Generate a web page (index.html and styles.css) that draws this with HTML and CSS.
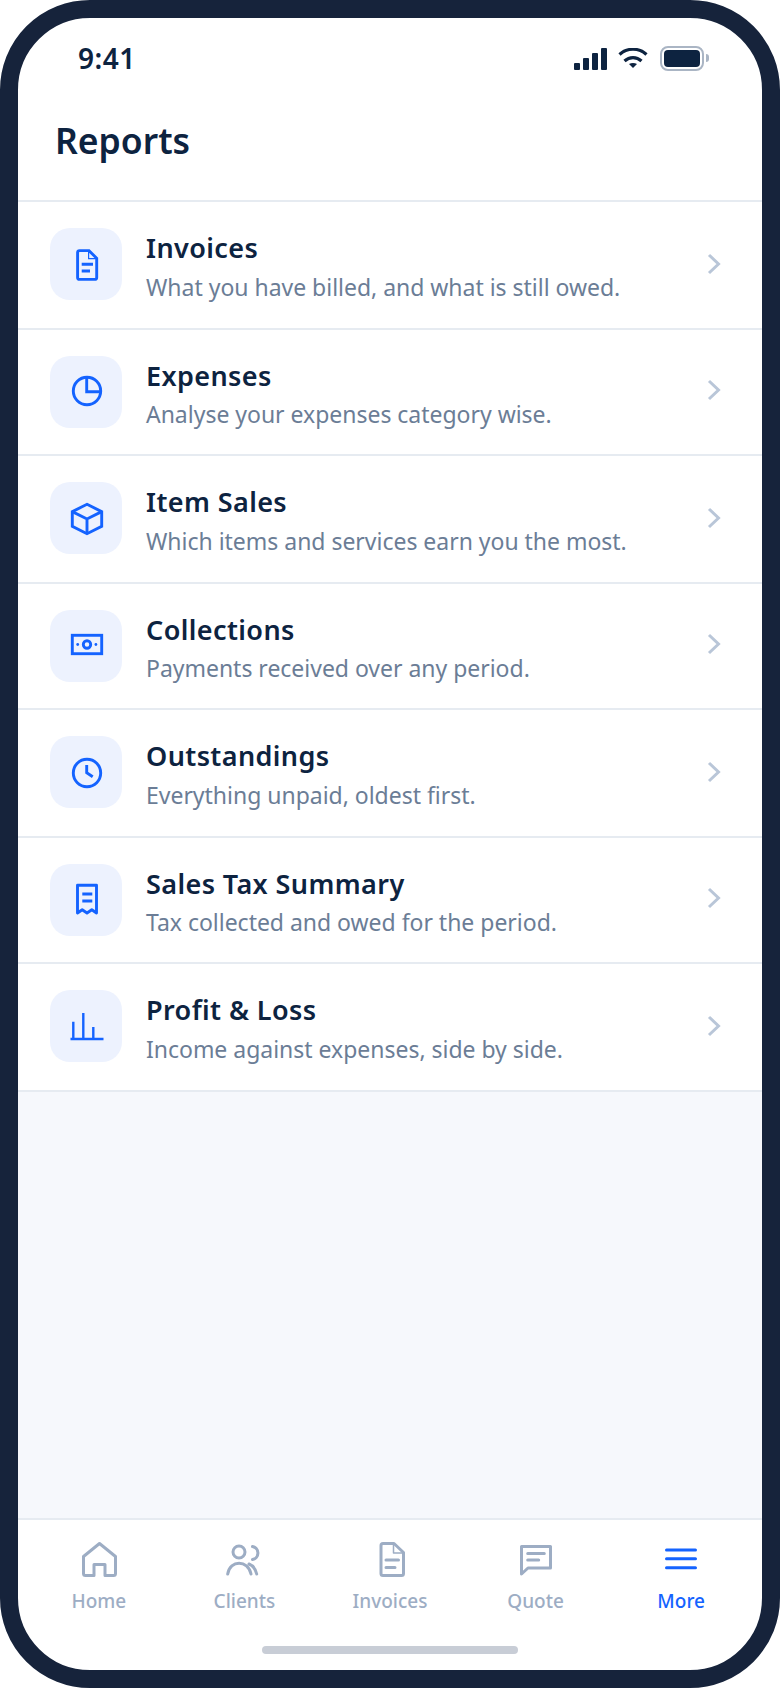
FILE: index.html
```html
<!DOCTYPE html>
<html lang="en">
<head>
<meta charset="UTF-8" />
<meta name="viewport" content="width=device-width, initial-scale=1" />
<title>Reports</title>
<link rel="stylesheet" href="styles.css">
</head>
<body>
  <div class="phone">
    <div class="status-bar">
      <span class="time">9:41</span>
      <div class="status-icons">
        <div class="signal"><i></i><i></i><i></i><i></i></div>
        <svg class="wifi" width="30" height="20" viewBox="0 0 30 20">
          <path d="M1.500 6.500C9 -0.500 21 -0.500 28.500 6.500" fill="none" stroke="#0d2340" stroke-width="3.200"/>
          <path d="M6.500 13C11.500 8.500 18.500 8.500 23.500 13" fill="none" stroke="#0d2340" stroke-width="3.200"/>
          <path d="M11 16C13.500 14.700 16.500 14.700 19 16L15 20Z" fill="#0d2340"/>
        </svg>
        <div class="battery"><div class="battery-level"></div></div>
        <div class="battery-nub"></div>
      </div>
    </div>

    <h1 class="page-title">Reports</h1>

    <ul class="report-list">
      <li class="report-row">
        <div class="report-icon">
          <svg viewBox="0 0 40 40"><path d="M13.600 6.600H23L30.700 14.300V33.400a2 2 0 0 1-2 2H13.600a2 2 0 0 1-2-2V8.600a2 2 0 0 1 2-2Z"/><path d="M22.600 7V14.600H30.400" stroke-width="1.200"/><path d="M15.700 20.200H27M15.700 27H24"/></svg>
        </div>
        <div class="report-text">
          <div class="report-name">Invoices</div>
          <div class="report-desc">What you have billed, and what is still owed.</div>
        </div>
        <svg class="chevron" viewBox="0 0 14 22"><path d="M2 2L11.500 11L2 20"/></svg>
      </li>
      <li class="report-row">
        <div class="report-icon">
          <svg viewBox="0 0 40 40"><circle cx="21" cy="19" r="13.700"/><path d="M20.700 5.500V19.700H34.500"/></svg>
        </div>
        <div class="report-text">
          <div class="report-name">Expenses</div>
          <div class="report-desc">Analyse your expenses category wise.</div>
        </div>
        <svg class="chevron" viewBox="0 0 14 22"><path d="M2 2L11.500 11L2 20"/></svg>
      </li>
      <li class="report-row">
        <div class="report-icon">
          <svg viewBox="0 0 40 40"><path d="M21 6.300L35.700 13.600V28.400L21 35.700L6.300 28.400V13.600Z"/><path d="M6.300 13.600L21 21L35.700 13.600M21 21V35.700"/></svg>
        </div>
        <div class="report-text">
          <div class="report-name">Item Sales</div>
          <div class="report-desc">Which items and services earn you the most.</div>
        </div>
        <svg class="chevron" viewBox="0 0 14 22"><path d="M2 2L11.500 11L2 20"/></svg>
      </li>
      <li class="report-row">
        <div class="report-icon">
          <svg viewBox="0 0 40 40"><rect x="6.300" y="9.300" width="29.400" height="18.400"/><circle cx="21" cy="18.500" r="3.700"/><circle class="dot" cx="11.700" cy="18.500" r="1.400"/><circle class="dot" cx="29.900" cy="18.500" r="1.400"/></svg>
        </div>
        <div class="report-text">
          <div class="report-name">Collections</div>
          <div class="report-desc">Payments received over any period.</div>
        </div>
        <svg class="chevron" viewBox="0 0 14 22"><path d="M2 2L11.500 11L2 20"/></svg>
      </li>
      <li class="report-row">
        <div class="report-icon">
          <svg viewBox="0 0 40 40"><circle cx="21" cy="21" r="13.700"/><path d="M20.700 13V20.700L26.700 24.700"/></svg>
        </div>
        <div class="report-text">
          <div class="report-name">Outstandings</div>
          <div class="report-desc">Everything unpaid, oldest first.</div>
        </div>
        <svg class="chevron" viewBox="0 0 14 22"><path d="M2 2L11.500 11L2 20"/></svg>
      </li>
      <li class="report-row">
        <div class="report-icon">
          <svg viewBox="0 0 40 40"><path class="receipt" d="M11.500 5.300H30.500V33L25.800 29.800L21 33L16.200 29.800L11.500 33Z"/><path d="M16.300 14H26.300M16.300 21H26.300"/></svg>
        </div>
        <div class="report-text">
          <div class="report-name">Sales Tax Summary</div>
          <div class="report-desc">Tax collected and owed for the period.</div>
        </div>
        <svg class="chevron" viewBox="0 0 14 22"><path d="M2 2L11.500 11L2 20"/></svg>
      </li>
      <li class="report-row">
        <div class="report-icon">
          <svg class="bars" viewBox="0 0 40 40"><path d="M4.500 33H37.500M7.300 33V15.700M17.300 33V7M27.300 33V21"/></svg>
        </div>
        <div class="report-text">
          <div class="report-name">Profit &amp; Loss</div>
          <div class="report-desc">Income against expenses, side by side.</div>
        </div>
        <svg class="chevron" viewBox="0 0 14 22"><path d="M2 2L11.500 11L2 20"/></svg>
      </li>
    </ul>

    <div class="filler"></div>

    <nav class="tab-bar">
      <div class="tab">
        <svg viewBox="0 0 44 44"><path d="M6.500 19.500L22.500 6.500L38.500 19.500V36.500A2 2 0 0 1 36.500 38.500H28V27.500H17V38.500H8.500A2 2 0 0 1 6.500 36.500Z"/></svg>
        <span>Home</span>
      </div>
      <div class="tab">
        <svg viewBox="0 0 44 44"><circle cx="17" cy="15" r="6"/><path d="M30.500 9.500A6.600 6.600 0 0 1 30.500 22.500M5.700 37C8 22.500 26 22.500 29 37M27 27C31 28.500 33.500 32 34.700 37"/></svg>
        <span>Clients</span>
      </div>
      <div class="tab">
        <svg viewBox="0 0 44 44"><path d="M15 6.500H26L35.500 15.500V36.500A2 2 0 0 1 33.500 38.500H15A2 2 0 0 1 13 36.500V8.500A2 2 0 0 1 15 6.500Z"/><path d="M25.500 7V16H35" stroke-width="1.500"/><path d="M18 23H30.500M18 30.500H27"/></svg>
        <span>Invoices</span>
      </div>
      <div class="tab">
        <svg viewBox="0 0 44 44"><path d="M7.500 9.500H36.500V31H14L7.500 37Z"/><path d="M13.700 16.500H30.300M13.700 23H24.700"/></svg>
        <span>Quote</span>
      </div>
      <div class="tab tab-active">
        <svg viewBox="0 0 44 44"><path d="M7.500 13H36.500M7.500 21.700H36.500M7.500 30.700H36.500"/></svg>
        <span>More</span>
      </div>
    </nav>

    <div class="home-bar"><div class="home-indicator"></div></div>
  </div>
</body>
</html>
```

FILE: styles.css
```css
* {
  box-sizing: border-box;
}

body {
  margin: 0;
  background: #fff;
  font-family: 'Noto Sans', 'Open Sans', sans-serif;
  color: #0d2340;
}

.phone {
  width: 780px;
  height: 1688px;
  border: 18px solid #16233b;
  border-radius: 90px;
  overflow: hidden;
  display: flex;
  flex-direction: column;
  background: #fff;
}

/* status bar */
.status-bar {
  height: 70px;
  flex: none;
  display: flex;
  justify-content: space-between;
  align-items: flex-start;
  padding: 20px 53px 0 60px;
}

.time {
  font-size: 28px;
  line-height: 40px;
  font-weight: 600;
  letter-spacing: 0.5px;
}

.status-icons {
  display: flex;
  align-items: flex-start;
  margin-top: 8px;
}

.signal {
  display: flex;
  align-items: flex-end;
  gap: 3px;
  height: 22px;
  margin-top: 2px;
}

.signal i {
  display: block;
  width: 6px;
  border-radius: 1px;
  background: #0d2340;
}

.signal i:nth-child(1) { height: 7px; }
.signal i:nth-child(2) { height: 12px; }
.signal i:nth-child(3) { height: 17px; }
.signal i:nth-child(4) { height: 22px; }

.wifi {
  margin: 2px 12px 0 11px;
}

.battery {
  width: 44px;
  height: 25px;
  padding: 2px;
  border: 2px solid #aab5c4;
  border-radius: 8px;
}

.battery-level {
  height: 100%;
  border-radius: 4px;
  background: #0d2340;
}

.battery-nub {
  width: 3px;
  height: 8px;
  margin: 8px 0 0 2px;
  border-radius: 0 3px 3px 0;
  background: #aab5c4;
}

/* header */
.page-title {
  margin: 0;
  flex: none;
  height: 114px;
  padding: 28px 0 0 37px;
  font-size: 35.5px;
  line-height: 48px;
  font-weight: 600;
  border-bottom: 2px solid #e6ebf1;
}

/* list */
.report-list {
  list-style: none;
  margin: 0;
  padding: 0;
  flex: none;
}

.report-row {
  display: flex;
  align-items: flex-start;
  padding: 26px 41px 0 32px;
  border-bottom: 2px solid #e6ebf1;
}

.report-row:nth-child(odd) { height: 128px; }
.report-row:nth-child(even) { height: 126px; }

.report-icon {
  width: 72px;
  height: 72px;
  flex: none;
  border-radius: 20px;
  background: #edf2fe;
  display: flex;
  align-items: center;
  justify-content: center;
}

.report-icon svg {
  width: 40px;
  height: 40px;
  fill: none;
  stroke: #1463ff;
  stroke-width: 2.9;
}

.report-icon svg.bars {
  stroke-width: 2.4;
}

.report-icon .dot {
  fill: #1463ff;
  stroke: none;
}

.report-icon .receipt {
  stroke-linejoin: round;
}

.report-text {
  flex: 1;
  margin-left: 24px;
  padding-top: 2px;
}

.report-name {
  font-size: 27px;
  line-height: 36px;
  font-weight: 600;
  letter-spacing: 0.4px;
  margin-bottom: 4px;
}

.report-row:nth-child(even) .report-name {
  margin-bottom: 3px;
}

.report-desc {
  font-size: 23px;
  line-height: 34px;
  letter-spacing: -0.02px;
  color: #6b7d96;
}

.chevron {
  width: 14px;
  height: 22px;
  margin-top: 25px;
  fill: none;
  stroke: #b9c6d8;
  stroke-width: 3;
}

.report-row:nth-child(even) .chevron {
  margin-top: 23px;
}

.filler {
  flex: 1;
  background: #f6f8fc;
}

/* tab bar */
.tab-bar {
  flex: none;
  display: flex;
  padding: 17px 8px 0;
  border-top: 2px solid #e6ebf1;
  height: 128px;
}

.tab {
  flex: 1;
  display: flex;
  flex-direction: column;
  align-items: center;
  font-size: 19px;
  line-height: 28px;
  font-weight: 500;
  color: #9dadc4;
}

.tab svg {
  width: 44px;
  height: 44px;
  margin-bottom: 6px;
  fill: none;
  stroke: #9dadc4;
  stroke-width: 3;
  stroke-linecap: round;
  stroke-linejoin: round;
}

.tab-active {
  color: #1463ff;
}

.tab-active svg {
  stroke: #1463ff;
}

.home-bar {
  flex: none;
  height: 24px;
  display: flex;
  justify-content: center;
}

.home-indicator {
  width: 256px;
  height: 8px;
  border-radius: 4px;
  background: #c8cdd6;
}
```
